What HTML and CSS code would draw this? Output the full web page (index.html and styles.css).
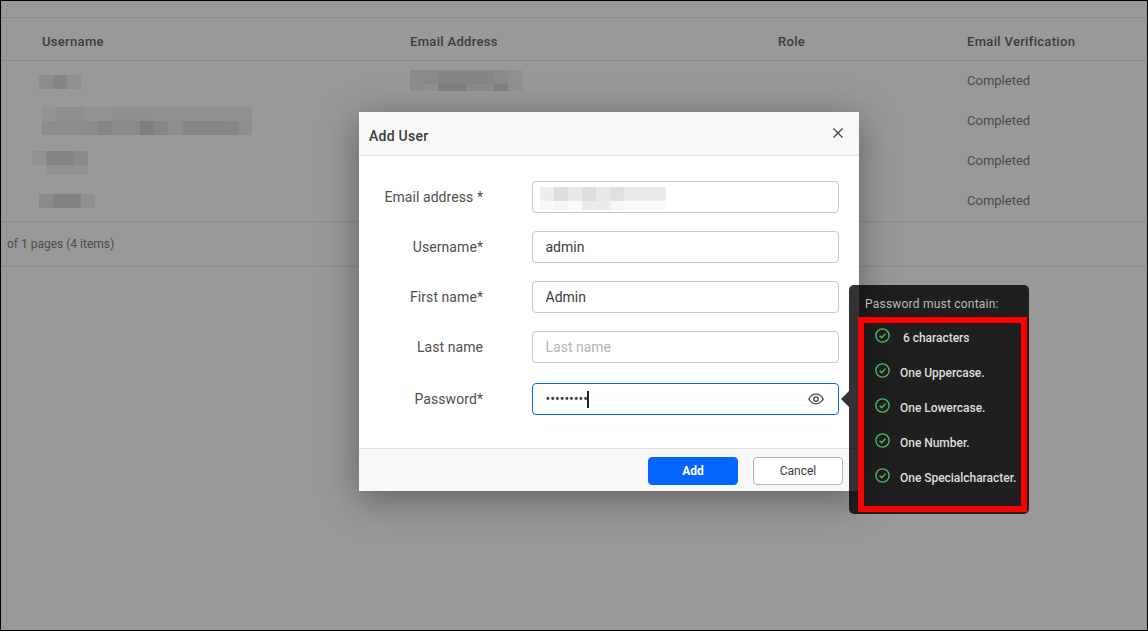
FILE: index.html
```html
<!DOCTYPE html>
<html lang="en">
<head>
    <meta charset="UTF-8">
    <meta name="viewport" content="width=device-width, initial-scale=1.0">
    <title>Add User</title>
    <link rel="stylesheet" href="styles.css">
</head>
<body>
    <div class="page">
        <div class="table">
            <div class="row head">
                <div>Username</div>
                <div>Email Address</div>
                <div>Role</div>
                <div>Email Verification</div>
            </div>
            <div class="row">
                <div><div class="blur name-1"></div></div>
                <div><div class="blur mail-1"></div></div>
                <div></div>
                <div>Completed</div>
            </div>
            <div class="row">
                <div><div class="blur name-2"></div></div>
                <div></div>
                <div></div>
                <div>Completed</div>
            </div>
            <div class="row">
                <div><div class="blur name-3"></div></div>
                <div></div>
                <div></div>
                <div>Completed</div>
            </div>
            <div class="row">
                <div><div class="blur name-4"></div></div>
                <div></div>
                <div></div>
                <div>Completed</div>
            </div>
            <div class="pager">of 1 pages (4 items)</div>
        </div>

        <form class="modal">
            <div class="modal-head">
                <h2>Add User</h2>
                <svg class="close" width="10" height="10" viewBox="0 0 10 10"><path d="M0.5 0.5L9.5 9.5M9.5 0.5L0.5 9.5"/></svg>
            </div>
            <div class="modal-body">
                <div class="form-row">
                    <label for="email">Email address *</label>
                    <div class="field">
                        <input type="text" id="email" name="email">
                        <div class="blur mail-field"></div>
                    </div>
                </div>
                <div class="form-row">
                    <label for="username">Username*</label>
                    <div class="field"><input type="text" id="username" name="username" value="admin"></div>
                </div>
                <div class="form-row">
                    <label for="first">First name*</label>
                    <div class="field"><input type="text" id="first" name="first" value="Admin"></div>
                </div>
                <div class="form-row">
                    <label for="last">Last name</label>
                    <div class="field"><input type="text" id="last" name="last" placeholder="Last name"></div>
                </div>
                <div class="form-row password-row">
                    <label for="password">Password*</label>
                    <div class="field focused">
                        <input type="password" id="password" name="password" value="123456789">
                        <span class="caret"></span>
                        <svg class="eye" width="16" height="12" viewBox="0 0 16 12"><path d="M0.8 6C2.6 2.8 5 1.2 8 1.2S13.4 2.8 15.2 6C13.4 9.2 11 10.8 8 10.8S2.6 9.2 0.8 6Z"/><circle cx="8" cy="6" r="2.2"/></svg>
                    </div>
                </div>
            </div>
            <div class="modal-foot">
                <button type="submit" class="btn primary">Add</button>
                <button type="button" class="btn">Cancel</button>
            </div>
        </form>

        <div class="tip">
            <div class="tip-title">Password must contain:</div>
            <ul class="rules">
                <li>
                    <svg width="15" height="15" viewBox="0 0 15 15"><circle cx="7.5" cy="7.5" r="6.6"/><path d="M4.6 7.7L6.8 9.8L10.5 5.6"/></svg>
                    <span class="first-rule">6 characters</span>
                </li>
                <li>
                    <svg width="15" height="15" viewBox="0 0 15 15"><circle cx="7.5" cy="7.5" r="6.6"/><path d="M4.6 7.7L6.8 9.8L10.5 5.6"/></svg>
                    <span>One Uppercase.</span>
                </li>
                <li>
                    <svg width="15" height="15" viewBox="0 0 15 15"><circle cx="7.5" cy="7.5" r="6.6"/><path d="M4.6 7.7L6.8 9.8L10.5 5.6"/></svg>
                    <span>One Lowercase.</span>
                </li>
                <li>
                    <svg width="15" height="15" viewBox="0 0 15 15"><circle cx="7.5" cy="7.5" r="6.6"/><path d="M4.6 7.7L6.8 9.8L10.5 5.6"/></svg>
                    <span>One Number.</span>
                </li>
                <li>
                    <svg width="15" height="15" viewBox="0 0 15 15"><circle cx="7.5" cy="7.5" r="6.6"/><path d="M4.6 7.7L6.8 9.8L10.5 5.6"/></svg>
                    <span>One Specialcharacter.</span>
                </li>
            </ul>
        </div>
    </div>
</body>
</html>
```

FILE: styles.css
```css
* {
    box-sizing: border-box;
}
body {
    margin: 0;
    font-family: Roboto, "Liberation Sans", sans-serif;
}
.page {
    position: relative;
    width: 1148px;
    height: 631px;
    overflow: hidden;
    border: 1px solid #000;
    background: #999;
}

/* table behind the dialog */
.table {
    padding-top: 16px;
}
.row {
    display: grid;
    grid-template-columns: 368px 368px 189px 1fr;
    align-items: center;
    height: 40px;
    padding-left: 41px;
    padding-bottom: 2px;
    font-size: 13px;
    color: #474b4f;
}
.head {
    height: 44px;
    border-top: 1px solid #8c8c8c;
    border-bottom: 1px solid #8c8c8c;
    padding-top: 4px;
    padding-bottom: 0;
    font-weight: 500;
    letter-spacing: 0.32px;
    color: #3c3c3c;
}
.pager {
    height: 46px;
    padding: 13px 0 0 6px;
    border-top: 1px solid #8c8c8c;
    border-bottom: 1px solid #8c8c8c;
    font-size: 12px;
    line-height: 18px;
    color: #4b4b4b;
}

/* blurred out values */
.blur {
    background-repeat: no-repeat;
}
.name-1 {
    width: 42px;
    height: 14px;
    margin: 4px 0 0 -3px;
    background-image: linear-gradient(90deg, #8d8d8d 0 14px, #858585 14px 28px, #919191 28px);
}
.name-2 {
    width: 210px;
    height: 28px;
    margin-top: 2px;
    background-image:
        linear-gradient(90deg, #939393 0 14px, #8e8e8e 14px 42px, #929290 42px 70px, #8f8f8f 70px 112px, #919191 112px 182px, #8f9191 182px),
        linear-gradient(90deg, #8c8c8c 0 42px, #8b8a88 42px 56px, #828787 56px 70px, #8a8a8a 70px 98px, #7f7f7f 98px 112px, #898785 112px 126px, #8e8e90 126px 140px, #868686 140px 196px, #8d8f8f 196px);
    background-size: 100% 14px, 100% 14px;
    background-position: top, bottom;
}
.name-3 {
    width: 56px;
    height: 24px;
    margin: 6px 0 0 -10px;
    background-image:
        linear-gradient(90deg, #929292 0 14px, #858483 14px 42px, #8a8a8a 42px),
        linear-gradient(90deg, #9a9a9a 0 14px, #929292 14px);
    background-size: 100% 14px, 100% 10px;
    background-position: top, bottom;
}
.name-4 {
    width: 56px;
    height: 14px;
    margin: 2px 0 0 -3px;
    background-image: linear-gradient(90deg, #8a8a8a 0 14px, #828282 14px 42px, #8f8f8f 42px);
}
.mail-1 {
    width: 112px;
    height: 21px;
    margin-top: 1px;
    background-image:
        linear-gradient(90deg, #8a8c8c 0 28px, #858787 28px 84px, #8b8b8b 84px 98px, #8e9092 98px),
        linear-gradient(90deg, #8e8e8e 0 14px, #929292 14px 28px, #7f7f7f 28px 56px, #8c8c8c 56px 84px, #808080 84px 98px, #8f9193 98px);
    background-size: 100% 14px, 100% 7px;
    background-position: top, bottom;
}
.mail-field {
    position: absolute;
    left: 7px;
    top: 5px;
    width: 126px;
    height: 23px;
    background-image:
        linear-gradient(90deg, #eee 0 14px, #ddd 14px 28px, #e9e9e9 28px 42px, #ddd 42px 56px, #e9e9e9 56px 70px, #e0e0e0 70px 84px, #ebebeb 84px),
        linear-gradient(90deg, #f8f8f8 0 14px, #f5f5f5 14px 28px, #fafafa 28px 42px, #ebebeb 42px 70px, #f6f6f6 70px 84px, #fafafa 84px);
    background-size: 100% 14px, 100% 9px;
    background-position: top, bottom;
}

/* dialog */
.modal {
    position: absolute;
    left: 358px;
    top: 111px;
    width: 500px;
    height: 379px;
    display: flex;
    flex-direction: column;
    background: #fff;
    box-shadow: 0 8px 36px rgba(0, 0, 0, 0.38);
}
.modal-head {
    display: flex;
    justify-content: space-between;
    align-items: center;
    height: 44px;
    padding: 0 16px 0 10px;
    background: #f8f8f8;
    border-bottom: 1px solid #e0e0e0;
}
.modal-head h2 {
    margin: 4px 0 0;
    font-size: 14px;
    font-weight: 500;
    letter-spacing: 0.25px;
    color: #3c3c3c;
}
.close {
    margin-bottom: 1px;
}
.close path {
    fill: none;
    stroke: #444;
    stroke-width: 1.3;
}
.modal-body {
    flex: 1;
    padding-top: 25px;
}
.form-row {
    display: flex;
    align-items: center;
    height: 32px;
    margin-bottom: 18px;
}
.password-row {
    margin-top: 20px;
}
.form-row label {
    width: 124px;
    margin-right: 49px;
    text-align: right;
    font-size: 14px;
    letter-spacing: 0.07px;
    color: #505050;
}
.field {
    position: relative;
    display: flex;
    align-items: center;
    width: 307px;
    height: 32px;
    padding: 0 14px 0 12.5px;
    border: 1px solid #c8c8c8;
    border-radius: 4px;
}
.field input {
    flex: 1;
    min-width: 0;
    padding: 0;
    border: 0;
    outline: 0;
    font-family: inherit;
    font-size: 14px;
    color: #3c3c3c;
    background: transparent;
}
.field input::placeholder {
    color: #b5b5b5;
}
.field.focused {
    border-color: #0565ff;
}
.field.focused input {
    flex: 0 0 41.5px;
}
.caret {
    width: 2px;
    height: 17px;
    margin-right: auto;
    background: #222;
}
.eye path,
.eye circle {
    fill: none;
    stroke: #444;
    stroke-width: 1.3;
}
.modal-foot {
    display: flex;
    justify-content: flex-end;
    align-items: center;
    gap: 15px;
    height: 43px;
    padding: 1px 16px 0 0;
    background: #f8f8f8;
    border-top: 1px solid #e0e0e0;
}
.btn {
    width: 90px;
    height: 28px;
    padding: 0;
    font-family: inherit;
    font-size: 12px;
    color: #3c3c3c;
    background: #fff;
    border: 1px solid #b5b5b5;
    border-radius: 4px;
}
.btn.primary {
    font-weight: 700;
    color: #fff;
    background: #0565ff;
    border-color: #0565ff;
}

/* password tooltip */
.tip {
    position: absolute;
    left: 848px;
    top: 284px;
    width: 180px;
    height: 229px;
    padding: 0 2px 2px 9px;
    display: flex;
    flex-direction: column;
    background: rgba(0, 0, 0, 0.8);
    border-radius: 5px;
}
.tip::before {
    content: "";
    position: absolute;
    left: -8px;
    top: 106px;
    border-style: solid;
    border-width: 8px 8px 8px 0;
    border-color: transparent rgba(0, 0, 0, 0.8) transparent transparent;
}
.tip-title {
    height: 32px;
    padding: 12px 0 0 7px;
    font-size: 12px;
    line-height: 14px;
    letter-spacing: 0.22px;
    color: #bbb;
}
.rules {
    flex: 1;
    margin: 0;
    padding: 5px 0 0 11px;
    list-style: none;
    border: 6px solid #f00;
}
.rules li {
    display: flex;
    height: 35px;
    font-size: 12px;
    font-weight: 500;
    line-height: 14px;
    color: #ddd;
}
.rules svg {
    flex: none;
    margin-right: 10px;
}
.rules circle,
.rules path {
    fill: none;
    stroke: #4fb85f;
    stroke-width: 1.4;
}
.rules span {
    margin-top: 3px;
    white-space: nowrap;
    letter-spacing: -0.03px;
}
.rules .first-rule {
    margin-left: 3px;
}
```
